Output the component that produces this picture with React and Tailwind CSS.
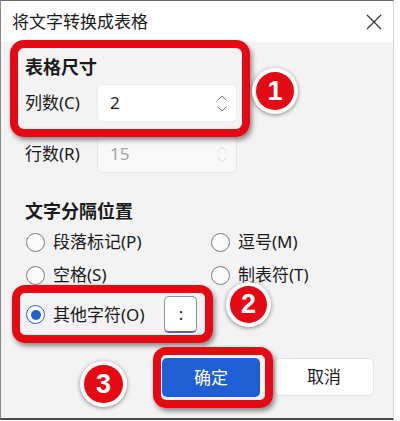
import { ChevronUp, ChevronDown } from "lucide-react";

function Spin({ value, disabled }) {
  return (
    <div
      className={`w-[140px] h-[38px] rounded-[5px] border flex items-center justify-between pl-3 pr-[6px] ${
        disabled ? "bg-[#f8f8f8] border-[#e6e6e6] text-[#a3a3a3]" : "bg-white border-[#ececec] text-[#1a1a1a]"
      }`}
    >
      <span className="text-[17px]">{value}</span>
      <div className={`flex flex-col items-center -space-y-[5px] ${disabled ? "text-[#d0d0d0]" : "text-[#555]"}`}>
        <ChevronUp size={16} strokeWidth={1.2} />
        <ChevronDown size={16} strokeWidth={1.2} />
      </div>
    </div>
  );
}

function Radio({ label, checked }) {
  return (
    <label className="flex items-center gap-[8px] h-6">
      {checked ? (
        <span className="w-[19px] h-[19px] rounded-full border border-[#2160d3] bg-white flex items-center justify-center">
          <span className="w-[10px] h-[10px] rounded-full bg-[#2160d3]" />
        </span>
      ) : (
        <span className="w-[19px] h-[19px] rounded-full border border-[#7a7a7a] bg-[#fbfbfb]" />
      )}
      <span className="text-[17px] text-[#1a1a1a]">{label}</span>
    </label>
  );
}

function Badge({ n, className }) {
  return (
    <div
      className={`absolute rounded-full bg-white p-[4px] shadow-[0_1px_4px_rgba(0,0,0,0.45)] ${className}`}
    >
      <div className="w-full h-full rounded-full bg-[#e50914] flex items-center justify-center text-white text-[27px] font-black leading-none font-['Liberation_Sans',sans-serif]">
        {n}
      </div>
    </div>
  );
}

export default function App() {
  return (
    <div className="w-[400px] h-[421px] bg-white relative overflow-hidden font-['Noto_Sans','Noto_Sans_CJK_SC',sans-serif]">
      <div className="w-[394px] h-[420px] border-t border-l border-b-2 border-r border-t-[#6a6a6a] border-l-[#8a8a8a] border-b-[#4a4a4a] border-r-[#d4d4d4] flex flex-col">
        {/* title bar */}
        <div className="h-[41px] bg-white flex items-center justify-between pl-[11px] pr-[10px] shrink-0">
          <span className="text-[17px] text-[#1a1a1a]">将文字转换成表格</span>
          <svg width="18" height="18" viewBox="0 0 18 18" className="text-[#333]">
            <path d="M2 2 L16 16 M16 2 L2 16" stroke="currentColor" strokeWidth="1.2" />
          </svg>
        </div>

        {/* body */}
        <div className="flex-1 bg-[#f3f3f3] px-6 pt-[13px]">
          <div className="h-6 leading-6 text-[18px] font-bold text-[#1a1a1a]">表格尺寸</div>
          <div className="mt-[5px] flex items-center">
            <span className="w-[72px] text-[17px] text-[#1a1a1a]">列数(C)</span>
            <Spin value="2" />
          </div>
          <div className="mt-[13px] flex items-center">
            <span className="w-[72px] text-[17px] text-[#1a1a1a]">行数(R)</span>
            <Spin value="15" disabled />
          </div>

          <div className="mt-[26px] h-6 leading-6 text-[18px] font-bold text-[#1a1a1a]">文字分隔位置</div>
          <div className="grid grid-cols-[185px_1fr] pl-px">
            <div className="mt-[7px]"><Radio label="段落标记(P)" /></div>
            <div className="mt-[7px]"><Radio label="逗号(M)" /></div>
            <div className="mt-[9px]"><Radio label="空格(S)" /></div>
            <div className="mt-[9px]"><Radio label="制表符(T)" /></div>
          </div>
          <div className="mt-[9px] flex items-center pl-px">
            <Radio label="其他字符(O)" checked />
            <div className="ml-[20px] w-[33px] h-[37px] rounded-[5px] bg-white border border-[#8a94a8] border-b-2 border-b-[#4d6aa8] flex items-center justify-center text-[17px] text-[#1a1a1a]">
              :
            </div>
          </div>

          <div className="mt-[25px] flex justify-end gap-[14px] -mr-[5px]">
            <button className="w-[98px] h-[39px] rounded-[5px] bg-[#1f5fd6] text-white text-[17px]">确定</button>
            <button className="w-[100px] h-[38px] rounded-[5px] bg-white border border-[#e3e3e3] text-[#1a1a1a] text-[17px]">取消</button>
          </div>
        </div>
      </div>

      {/* annotations */}
      <div className="absolute left-[10px] top-[40px] w-[240px] h-[97px] rounded-[14px] border-[8px] border-[#e50914] shadow-[2px_3px_5px_rgba(0,0,0,0.45)]" />
      <div className="absolute left-[12px] top-[285px] w-[201px] h-[58px] rounded-[13px] border-[8px] border-[#e50914] shadow-[2px_3px_5px_rgba(0,0,0,0.45)]" />
      <div className="absolute left-[153px] top-[347px] w-[120px] h-[61px] rounded-[13px] border-[8px] border-[#e50914] shadow-[2px_3px_5px_rgba(0,0,0,0.45)]" />

      <Badge n="1" className="left-[252px] top-[68px] w-[46px] h-[46px]" />
      <Badge n="2" className="left-[226px] top-[282px] w-[45px] h-[45px]" />
      <Badge n="3" className="left-[80px] top-[361px] w-[47px] h-[46px]" />
    </div>
  );
}
